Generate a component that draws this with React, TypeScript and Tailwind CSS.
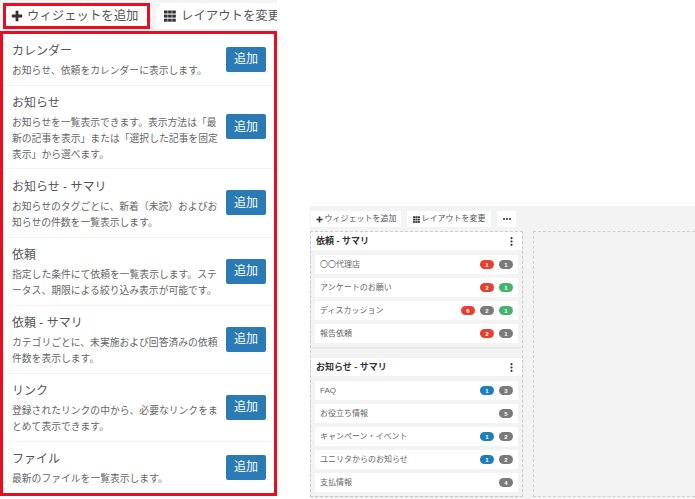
import React from "react";

const jp = "font-['Liberation_Sans','Noto_Sans_CJK_JP',sans-serif]";

const catalog = [
  { t: "カレンダー", d: "お知らせ、依頼をカレンダーに表示します。", h: "h-[51px]" },
  { t: "お知らせ", d: "お知らせを一覧表示できます。表示方法は「最新の記事を表示」または「選択した記事を固定表示」から選べます。", h: "h-[82px]" },
  { t: "お知らせ - サマリ", d: "お知らせのタグごとに、新着（未読）およびお知らせの件数を一覧表示します。", h: "h-[68px]" },
  { t: "依頼", d: "指定した条件にて依頼を一覧表示します。ステータス、期限による絞り込み表示が可能です。", h: "h-[67px]" },
  { t: "依頼 - サマリ", d: "カテゴリごとに、未実施および回答済みの依頼件数を表示します。", h: "h-[67px]" },
  { t: "リンク", d: "登録されたリンクの中から、必要なリンクをまとめて表示できます。", h: "h-[67px]" },
  { t: "ファイル", d: "最新のファイルを一覧表示します。", h: "h-[51px]" },
];

type B = { n: number; c: "r" | "g" | "n" | "b" };
const colors: Record<B["c"], string> = {
  r: "bg-[#e8402f]",
  g: "bg-[#7a7a7a]",
  n: "bg-[#45b36e]",
  b: "bg-[#1f7dbb]",
};

const w1: { t: string; b: B[] }[] = [
  { t: "〇〇代理店", b: [{ n: 1, c: "r" }, { n: 1, c: "g" }] },
  { t: "アンケートのお願い", b: [{ n: 2, c: "r" }, { n: 1, c: "n" }] },
  { t: "ディスカッション", b: [{ n: 6, c: "r" }, { n: 2, c: "g" }, { n: 1, c: "n" }] },
  { t: "報告依頼", b: [{ n: 2, c: "r" }, { n: 1, c: "g" }] },
];
const w2: { t: string; b: B[] }[] = [
  { t: "FAQ", b: [{ n: 1, c: "b" }, { n: 3, c: "g" }] },
  { t: "お役立ち情報", b: [{ n: 5, c: "g" }] },
  { t: "キャンペーン・イベント", b: [{ n: 1, c: "b" }, { n: 2, c: "g" }] },
  { t: "ユニリタからのお知らせ", b: [{ n: 1, c: "b" }, { n: 2, c: "g" }] },
  { t: "支払情報", b: [{ n: 4, c: "g" }] },
];

function Plus({ size, className }: { size: number; className?: string }) {
  return (
    <svg width={size} height={size} viewBox="0 0 12 12" className={className}>
      <path d="M4.6 0.8h2.8v3.8h3.8v2.8H7.4v3.8H4.6V7.4H0.8V4.6h3.8z" fill="#333" />
    </svg>
  );
}

function Grid({ size, className }: { size: number; className?: string }) {
  const cells = [0, 1, 2];
  return (
    <svg width={size} height={size} viewBox="0 0 12 12" className={className}>
      {cells.map((y) =>
        cells.map((x) => <rect key={`${x}${y}`} x={x * 4.1} y={y * 4.1 + 0.5} width="3.6" height="3" fill="#333" />)
      )}
    </svg>
  );
}

function Widget({ title, rows, className }: { title: string; rows: { t: string; b: B[] }[]; className?: string }) {
  return (
    <div className={`shadow-[0_1px_2px_rgba(0,0,0,0.08)] ${className ?? ""}`}>
      <div className="h-[18px] bg-white flex items-center justify-between pl-[5px] pr-[9px]">
        <span className="text-[9px] font-bold text-[#333] leading-none">{title}</span>
        <svg width="3" height="9" viewBox="0 0 3 9">
          <circle cx="1.5" cy="1.2" r="1.1" fill="#333" />
          <circle cx="1.5" cy="4.5" r="1.1" fill="#333" />
          <circle cx="1.5" cy="7.8" r="1.1" fill="#333" />
        </svg>
      </div>
      <div className="flex flex-col gap-[4px] px-[4px] pt-[5px] pb-[4px]">
        {rows.map((r) => (
          <div key={r.t} className="h-[19px] bg-white flex items-center justify-between pl-[5px] pr-[5px]">
            <span className="text-[8px] text-[#666] leading-none">{r.t}</span>
            <div className="flex gap-[5px]">
              {r.b.map((b, i) => (
                <span
                  key={i}
                  className={`w-[14px] h-[9px] rounded-full ${colors[b.c]} text-white text-[6px] font-bold flex items-center justify-center leading-none`}
                >
                  {b.n}
                </span>
              ))}
            </div>
          </div>
        ))}
      </div>
    </div>
  );
}

export default function App() {
  return (
    <div className={`${jp} w-[695px] h-[499px] bg-white flex overflow-hidden`}>
      <div className="w-[277px] shrink-0 flex flex-col">
        <div className="h-[31px] bg-[#f3f3f3] flex items-center pl-[3px] pt-[1px] overflow-hidden">
          <button className="w-[147px] h-[26px] border-[3px] border-[#e60f22] bg-white flex items-center justify-start pl-[5px] gap-[4px] text-[12.4px] text-[#555] shrink-0 whitespace-nowrap">
            <Plus size={12} />
            ウィジェットを追加
          </button>
          <button className="w-[128px] h-[26px] ml-[6px] bg-white flex items-center gap-[5px] pl-[8px] text-[12.4px] text-[#555] shrink-0 whitespace-nowrap">
            <Grid size={12} className="shrink-0" />
            レイアウトを変更
          </button>
        </div>
        <div className="h-[465px] border-[3px] border-[#e60f22] bg-[#f3f3f3] flex flex-col gap-[1px]">
          {catalog.map((c) => (
            <div key={c.t} className={`${c.h} bg-white flex items-center pl-[9px] pr-[8px] shrink-0`}>
              <div className="w-[207px] shrink-0 pt-[3px]">
                <div className="text-[12px] leading-[16px] text-[#555] mb-[4px]">{c.t}</div>
                <div className="text-[9.8px] leading-[16px] text-[#666]">{c.d}</div>
              </div>
              <button className="ml-[7px] mb-[1px] w-[40px] h-[25px] bg-[#2a7ab5] rounded-[2px] text-white text-[12px] shrink-0">追加</button>
            </div>
          ))}
        </div>
      </div>

      <div className="ml-[33px] mt-[206px] flex-1 bg-[#f3f3f3] flex flex-col">
        <div className="flex items-center h-[25px] pl-[1px] pt-[1px] gap-[6px] shrink-0">
          <button className="w-[90px] h-[16px] bg-white flex items-center justify-center gap-[2px] text-[8px] text-[#555] whitespace-nowrap">
            <Plus size={7} />
            ウィジェットを追加
          </button>
          <button className="w-[84px] h-[16px] bg-white flex items-center justify-center gap-[2px] text-[8px] text-[#555] whitespace-nowrap">
            <Grid size={7} />
            レイアウトを変更
          </button>
          <button className="w-[19px] h-[16px] bg-white flex items-center justify-center gap-[1px]">
            <i className="block w-[2px] h-[2px] rounded-full bg-[#333]" />
            <i className="block w-[2px] h-[2px] rounded-full bg-[#333]" />
            <i className="block w-[2px] h-[2px] rounded-full bg-[#333]" />
          </button>
        </div>
        <div className="flex flex-1 gap-[10px] pb-[2px]">
          <div className="w-[213px] shrink-0 border border-dashed border-[#d0d0d0] flex flex-col gap-[11px]">
            <Widget title="依頼 - サマリ" rows={w1} />
            <Widget title="お知らせ - サマリ" rows={w2} />
          </div>
          <div className="flex-1 border border-dashed border-[#d0d0d0] border-r-0" />
        </div>
      </div>
    </div>
  );
}
